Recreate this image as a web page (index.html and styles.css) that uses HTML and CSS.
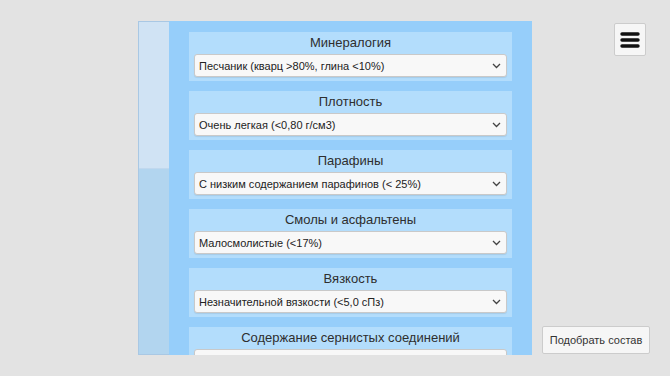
FILE: index.html
```html
<!DOCTYPE html>
<html lang="ru">

<head>
    <meta charset="UTF-8">
    <meta name="viewport" content="width=device-width, initial-scale=1.0">
    <title>Подбор состава</title>
    <link rel="stylesheet" href="styles.css">
</head>

<body>
    <div class="page">
        <div class="panel">
            <div class="side">
                <div class="side-top"></div>
                <div class="side-bottom"></div>
            </div>

            <div class="content">
                <div class="card">
                    <div class="card-title">Минералогия</div>
                    <select class="field">
                        <option>Песчаник (кварц &gt;80%, глина &lt;10%)</option>
                    </select>
                </div>
                <div class="card">
                    <div class="card-title">Плотность</div>
                    <select class="field">
                        <option>Очень легкая (&lt;0,80 г/см3)</option>
                    </select>
                </div>
                <div class="card">
                    <div class="card-title">Парафины</div>
                    <select class="field">
                        <option>С низким содержанием парафинов (&lt; 25%)</option>
                    </select>
                </div>
                <div class="card">
                    <div class="card-title">Смолы и асфальтены</div>
                    <select class="field">
                        <option>Малосмолистые (&lt;17%)</option>
                    </select>
                </div>
                <div class="card">
                    <div class="card-title">Вязкость</div>
                    <select class="field">
                        <option>Незначительной вязкости (&lt;5,0 сПз)</option>
                    </select>
                </div>
                <div class="card">
                    <div class="card-title">Содержание сернистых соединений</div>
                    <select class="field">
                        <option>Малосернистые (&lt;0,5%)</option>
                    </select>
                </div>
            </div>
        </div>

        <div class="right">
            <button class="menu-btn" type="button" aria-label="Меню">
                <svg width="20" height="18" viewBox="0 0 20 18">
                    <path d="M2 3h16M2 9h16M2 15h16" stroke="#111" stroke-width="3.4" stroke-linecap="round" />
                </svg>
            </button>
            <button class="pick-btn" type="button">Подобрать состав</button>
        </div>
    </div>
</body>

</html>
```

FILE: styles.css
```css
body {
    font-family: "Liberation Sans", Arial, sans-serif;
    background-color: #e3e3e3;
    margin: 0;
    padding: 0;
    color: #333333;
}

.page {
    display: flex;
    height: 376px;
    box-sizing: border-box;
    padding: 21px 20px 0 138px;
}

.panel {
    display: flex;
    width: 394px;
    height: 334px;
    overflow: hidden;
}

/* left strip */
.side {
    width: 31px;
    display: flex;
    flex-direction: column;
    box-sizing: border-box;
    border: 1px solid #a9c8e4;
    border-right: none;
}

.side-top {
    height: 146px;
    background-color: #d0e3f4;
    border-bottom: 1px solid #c0d8ee;
}

.side-bottom {
    flex: 1;
    background-color: #b2d5ef;
}

.content {
    flex: 1;
    background-color: #96cefa;
    padding: 11px 20px 0 20px;
    display: flex;
    flex-direction: column;
    gap: 10px;
}

.card {
    background-color: #b3ddfc;
    padding: 2px 5px 4px 5px;
    flex-shrink: 0;
}

.card-title {
    text-align: center;
    font-size: 13px;
    line-height: 18px;
    margin-bottom: 2px;
    color: #2e2e2e;
}

.field {
    display: block;
    width: 100%;
    height: 23px;
    box-sizing: border-box;
    appearance: none;
    -webkit-appearance: none;
    font-family: "Liberation Sans", Arial, sans-serif;
    font-size: 11px;
    color: #222222;
    padding: 0 24px 0 4px;
    border: 1px solid #c9c9c9;
    border-radius: 3px;
    background-color: #f8f8f8;
    background-image: url("data:image/svg+xml;utf8,<svg xmlns='http://www.w3.org/2000/svg' width='9' height='6' viewBox='0 0 9 6'><path d='M1 1l3.5 3.5L8 1' fill='none' stroke='%23444' stroke-width='1.3'/></svg>");
    background-repeat: no-repeat;
    background-position: right 5px center;
    box-shadow: 0 1px 1px rgba(0, 0, 0, 0.08);
}

.right {
    flex: 1;
    display: flex;
    flex-direction: column;
    align-items: flex-end;
    justify-content: space-between;
    padding: 2px 0 22px 0;
}

.menu-btn {
    width: 32px;
    height: 33px;
    margin-right: 4px;
    padding: 0;
    display: flex;
    align-items: center;
    justify-content: center;
    background-color: #f6f6f6;
    border: 1px solid #cccccc;
    border-radius: 2px;
}

.pick-btn {
    height: 28px;
    width: 108px;
    padding: 0;
    font-family: "Liberation Sans", Arial, sans-serif;
    font-size: 11px;
    color: #333333;
    background-color: #f6f6f6;
    border: 1px solid #cccccc;
    border-radius: 2px;
}
```
